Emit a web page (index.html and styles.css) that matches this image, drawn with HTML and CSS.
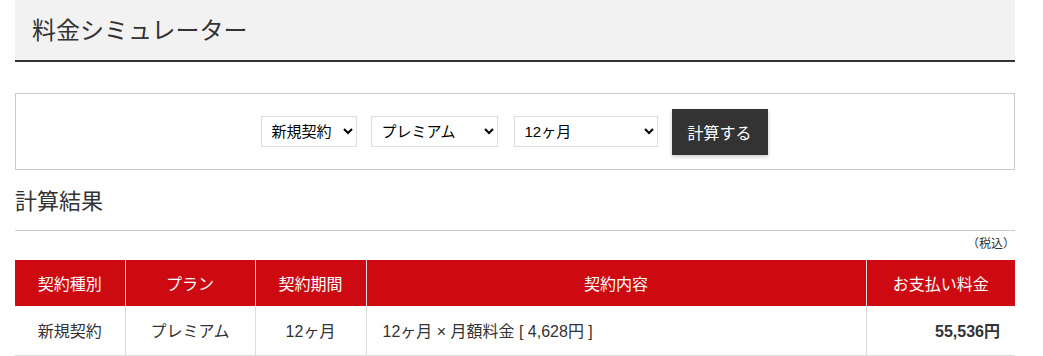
FILE: index.html
```html
<!DOCTYPE html>
<html lang="ja">
<head>
<meta charset="utf-8">
<title>料金シミュレーター</title>
<link rel="stylesheet" href="styles.css">
</head>
<body>
<div class="page">
  <header class="title-bar">
    <h1 class="title">料金シミュレーター</h1>
  </header>

  <form class="sim-form">
    <select class="sel sel-type">
      <option>新規契約</option>
    </select>
    <select class="sel sel-plan">
      <option>プレミアム</option>
    </select>
    <select class="sel sel-term">
      <option>12ヶ月</option>
    </select>
    <button type="button" class="calc-btn">計算する</button>
  </form>

  <h2 class="result-title">計算結果</h2>
  <p class="tax-note">（税込）</p>

  <table class="result-table">
    <colgroup>
      <col class="c1"><col class="c2"><col class="c3"><col class="c4"><col class="c5">
    </colgroup>
    <thead>
      <tr>
        <th>契約種別</th>
        <th>プラン</th>
        <th>契約期間</th>
        <th>契約内容</th>
        <th>お支払い料金</th>
      </tr>
    </thead>
    <tbody>
      <tr>
        <td>新規契約</td>
        <td>プレミアム</td>
        <td>12ヶ月</td>
        <td class="detail">12ヶ月 × 月額料金 [ 4,628円 ]</td>
        <td class="price">55,536円</td>
      </tr>
    </tbody>
  </table>
</div>
</body>
</html>
```

FILE: styles.css
```css
* { box-sizing: border-box; }

body {
  margin: 0;
  background: #fff;
  color: #333;
  font-family: "Liberation Sans", "Noto Sans CJK JP", sans-serif;
}

.page {
  width: 1000px;
  margin: 0 15px;
}

.title-bar {
  height: 62px;
  background: #f2f2f2;
  border-bottom: 2px solid #333;
  padding: 2px 0 0 17px;
  display: flex;
  align-items: center;
}

.title {
  margin: 0;
  font-size: 24px;
  font-weight: normal;
  color: #333;
  line-height: 1;
}

.sim-form {
  margin-top: 31px;
  height: 77px;
  border: 1px solid #ccc;
  display: flex;
  align-items: center;
  justify-content: center;
  padding-right: 2px;
}

.sel {
  height: 31px;
  border: 1px solid #ddd;
  background: #fff;
  color: #000;
  font-family: "Liberation Sans", "Noto Sans CJK JP", sans-serif;
  font-size: 15px;
  padding: 0 4px 0 6px;
  border-radius: 0;
}

.sel-type { width: 96px; margin-right: 14px; }
.sel-plan { width: 127px; margin-right: 16px; }
.sel-term { width: 144px; margin-right: 14px; }

.calc-btn {
  width: 96px;
  height: 46px;
  border: none;
  background: #333;
  color: #fff;
  font-family: "Liberation Sans", "Noto Sans CJK JP", sans-serif;
  font-size: 16px;
  box-shadow: 0 2px 4px rgba(0,0,0,0.2);
  padding: 0;
}

.result-title {
  margin: 0;
  padding: 17px 0 13px;
  line-height: 30px;
  font-size: 22px;
  font-weight: normal;
  color: #333;
  border-bottom: 1px solid #ccc;
}

.tax-note {
  margin: 0;
  padding: 5px 0 8px 0;
  line-height: 16px;
  font-size: 12px;
  text-align: right;
  color: #333;
}

.result-table {
  width: 1000px;
  border-collapse: collapse;
  table-layout: fixed;
  font-size: 16px;
}

.c1 { width: 110px; }
.c2 { width: 130px; }
.c3 { width: 111px; }
.c4 { width: 500px; }
.c5 { width: 149px; }

.result-table th {
  background: #cd0a11;
  color: #fff;
  font-weight: normal;
  height: 46px;
  padding: 0;
  text-align: center;
  border-left: 1px solid #ddd;
}

.result-table th:first-child,
.result-table td:first-child { border-left: none; }

.result-table td {
  height: 49px;
  padding: 0;
  text-align: center;
  border-left: 1px solid #ddd;
  border-bottom: 1px solid #ddd;
  color: #333;
}

.result-table td.detail {
  text-align: left;
  padding-left: 16px;
}

.result-table td.price {
  text-align: right;
  padding-right: 15px;
  font-weight: bold;
}
```
